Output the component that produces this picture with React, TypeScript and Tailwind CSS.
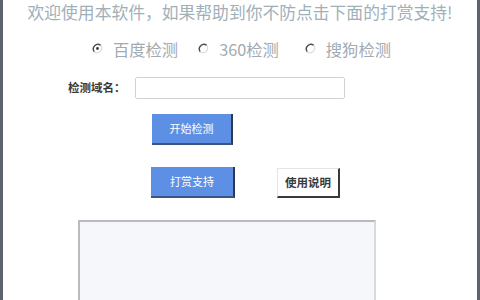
import { useState } from "react"

function Radio({ checked }: { checked: boolean }) {
  return (
    <svg width="11" height="11" viewBox="0 0 12 12" className="shrink-0">
      <circle cx="6" cy="6" r="5" fill="#ffffff" />
      <path d="M9.5 2.5 A5 5 0 0 0 2.5 9.5" fill="none" stroke="#4a4f55" strokeWidth="1.6" />
      <path d="M2.5 9.5 A5 5 0 0 0 9.5 2.5" fill="none" stroke="#d8dadc" strokeWidth="1.2" />
      {checked && <circle cx="6" cy="6" r="1.6" fill="#3a3f45" />}
    </svg>
  )
}

export default function App() {
  const [engine, setEngine] = useState("baidu")
  const [domain, setDomain] = useState("")

  const options = [
    { key: "baidu", label: "百度检测", cls: "ml-[89px]" },
    { key: "360", label: "360检测", cls: "ml-[20px]" },
    { key: "sogou", label: "搜狗检测", cls: "ml-[26px]" },
  ]

  return (
    <div className="w-[480px] h-[300px] overflow-hidden bg-white border-x-[3px] border-[#5c636a] font-['Noto_Sans_CJK_SC',sans-serif]">
      <div className="h-[24px] flex items-center justify-center text-[16.8px] leading-none text-[#9fb0b9] whitespace-nowrap">
        欢迎使用本软件，如果帮助到你不防点击下面的打赏支持!
      </div>

      <div className="mt-[13px] h-[24px] flex items-center">
        {options.map((o) => (
          <label
            key={o.key}
            className={`flex items-center gap-[10px] cursor-pointer ${o.cls}`}
            onClick={() => setEngine(o.key)}
          >
            <Radio checked={engine === o.key} />
            <span className="text-[16.3px] leading-none text-[#a2aab1] whitespace-nowrap">{o.label}</span>
          </label>
        ))}
      </div>

      <div className="mt-[16px] h-[22px] flex items-center pl-[65px]">
        <span className="w-[62px] text-[11.5px] font-bold text-[#3a3a3a] whitespace-nowrap">检测域名：</span>
        <input
          value={domain}
          onChange={(e) => setDomain(e.target.value)}
          className="ml-[5px] w-[210px] h-[22px] border border-[#cfd3d6] rounded-[2px] bg-white outline-none px-1 text-xs"
        />
      </div>

      <div className="mt-[15px] flex">
        <button className="ml-[149px] w-[81px] h-[31px] bg-[#5d90e4] border-r-[2px] border-b-[2px] border-r-[#2e3850] border-b-[#3d5482] text-[11px] text-white">
          开始检测
        </button>
      </div>

      <div className="mt-[22px] flex items-start">
        <button className="ml-[148px] w-[84px] h-[31px] bg-[#5d90e4] border-r-[2px] border-b-[2px] border-r-[#2e3850] border-b-[#3d5482] text-[11px] text-white">
          打赏支持
        </button>
        <button className="ml-[42px] mt-[1px] w-[63px] h-[30px] bg-white border-l border-t border-l-[#e4e4e4] border-t-[#e4e4e4] border-r-2 border-b-2 border-r-[#3a3a3a] border-b-[#3a3a3a] text-[11.5px] font-bold text-[#3a3a3a]">
          使用说明
        </button>
      </div>

      <textarea
        readOnly
        className="block mt-[22px] ml-[75px] w-[298px] h-[100px] resize-none bg-[#f6f7fb] border-2 border-[#b9bbbe] border-r-[#d8dadc] outline-none"
      />
    </div>
  )
}
